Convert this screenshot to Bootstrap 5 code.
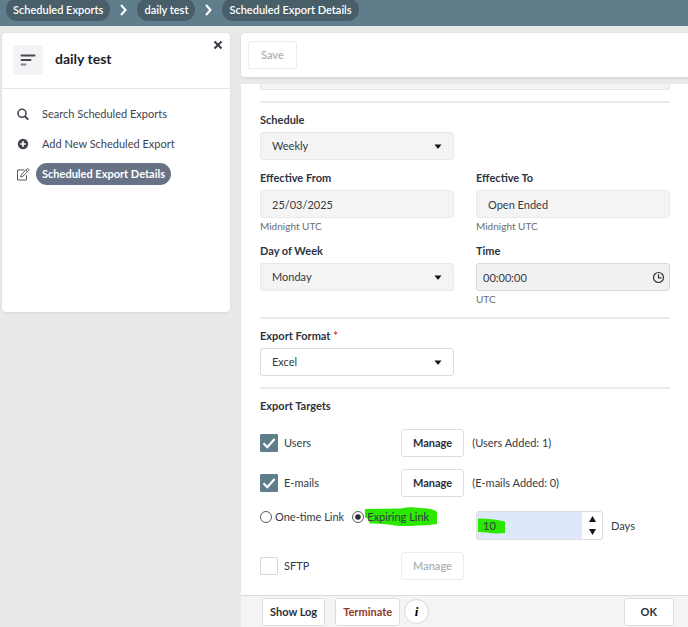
<!DOCTYPE html>
<html lang="en">
<head>
<meta charset="utf-8">
<meta name="viewport" content="width=device-width, initial-scale=1">
<title>Scheduled Export Details</title>
<link href="https://cdn.jsdelivr.net/npm/bootstrap@5.3.0/dist/css/bootstrap.min.css" rel="stylesheet">
<style>
body{font-family:Lato,"Open Sans",sans-serif;font-size:11px;line-height:16px;color:#343a46;background:#e9e9e9}
.topbar{background:#607d8b;height:26px;padding:0 6px 5px;gap:10px;flex:none}
.topbar a{background:#485e69;color:#fff;font-weight:600;border-radius:12px;padding:4px 7px 3px;text-decoration:none;white-space:nowrap}
.workspace{min-height:0;padding:7px 0 0 2px;gap:11px}
.side{width:228px;height:279px;flex:none;background:#fff;border-radius:4px;box-shadow:0 1px 3px rgba(0,0,0,.08)}
.side-head{height:56px;padding:0 11px 2px;gap:12px;border-bottom:1px solid #e6e7e9}
.side-icon{width:30px;height:30px;border-radius:4px;background:#f3f3f5}
.side-title{font-size:14px;font-weight:700;color:#1c1f2a;margin:0}
.close-btn{top:7px;right:7px;line-height:0}
.side-menu{padding:14px 14px;gap:8px}
.side-menu a{height:22px;gap:6px;color:#3f4450;text-decoration:none}
.side-menu svg{width:14px;height:14px;flex:none}
.side-menu span{padding:3px 6px;border-radius:11px}
.side-menu .current span{background:#687287;color:#fff;font-weight:700}
.tools{background:#fff;border-radius:4px 0 0 4px;padding:8px 7px;margin-bottom:7px;box-shadow:0 1px 3px rgba(0,0,0,.1)}
.pane{background:#fff;padding:0 18px 0 19px;min-height:0;overflow:hidden}
.act{font-size:11px;line-height:16px;font-weight:700;color:#2a2e38;background:#fff;border:1px solid #dcdddf;border-radius:3px;height:28px;padding:0 12px}
.act:disabled{color:#adb0b5;background:#fff;border-color:#ececec;opacity:1;font-weight:600}
.targets .act{padding:0 11px}
.act.danger-text{color:#8e3a2c;padding:0 7px}
.act.tight{padding:0 7px}
.clipped{height:6px;background:#f4f4f4;border:1px solid #e6e6e6;border-top:0;border-radius:0 0 3px 3px}
.rule{border:0;border-top:2px solid #ebebeb;opacity:1;margin:11px 0 9px}
.pair{--bs-gutter-x:22px;row-gap:10px}
.pair+.pair{margin-top:10px}
.cap{display:block;font-weight:700;color:#2f3440;margin:0 0 4px;font-size:11px}
.field,.field:disabled{font-size:11px;line-height:16px;height:28px;padding:0 11px;color:#343a46;border:1px solid #dcdddf;border-radius:3px;background-color:#fff;opacity:1}
.field.quiet{background-color:#f4f4f4;border-color:#e8e8e8}
.field.form-select{background-image:url("data:image/svg+xml,%3Csvg xmlns='http://www.w3.org/2000/svg' viewBox='0 0 8 5'%3E%3Cpath d='M0.5 0.5h7L4.6 4.2q-.6.6-1.2 0z' fill='%23111122'/%3E%3C/svg%3E");background-size:8px 5px;background-position:right 11px center}
.field.clock{background-color:#f1f1f1;border-color:#d9d9d9;padding:0 6px}
.clock-icon{right:5px;top:8px}
.hint{font-size:10px;line-height:14px;color:#6a6e76;margin-top:1px}
.targets{gap:12px;margin-top:15px}
.who{width:141px;gap:6px;flex:none}
.form-check-input.box{width:18px;height:18px;margin:0;border:1px solid #d6d8da;border-radius:1px;flex:none}
.form-check-input.box:checked{background-color:#607d8b;border-color:#607d8b;background-size:18px 18px;background-image:url("data:image/svg+xml,%3Csvg xmlns='http://www.w3.org/2000/svg' viewBox='0 0 18 18'%3E%3Cpath d='M3.500 9.200l3.800 4L14.600 5' fill='none' stroke='%23fff' stroke-width='2.200'/%3E%3C/svg%3E")}
.form-check-input.dot{width:12px;height:12px;margin:0;border:1px solid #5a5d65;flex:none;background-image:none}
.form-check-input.dot:checked{background:#fff url("data:image/svg+xml,%3Csvg xmlns='http://www.w3.org/2000/svg' viewBox='0 0 10 10'%3E%3Ccircle cx='5' cy='5' r='2.800' fill='%232a2d36'/%3E%3C/svg%3E") center/10px 10px no-repeat}
.kind{gap:3px}
.marked{isolation:isolate}
.marked .ink{z-index:-1;pointer-events:none}
.link-ink{left:-3px;top:-2px}
.num-ink{left:1px;top:6px}
.days-cell{padding-top:2px}
.days{width:127px;height:29px;border:1px solid #dcdddf;border-radius:3px;background:#dfe8fb;flex:none}
.days input{min-width:0;background:transparent;border:0;padding:0 6px;color:#343a46;appearance:textfield;-moz-appearance:textfield}
.days input::-webkit-inner-spin-button{display:none}
.steps{width:20px;background:#fff;flex:none;border-radius:0 3px 3px 0}
.steps button{flex:1;border:0;background:none;padding:0;line-height:0}
.foot{background:#f4f4f4;border-top:1px solid #dcdddf;padding:2px 14px 0 21px;height:32px;gap:10px;flex:none}
.info{width:25px;height:25px;border-radius:50%;border:1px solid #d8d9db;background:#fff;padding:0;font:italic 700 13px/16px "Liberation Serif",serif}
.info-wrap{margin-left:-6px;padding-top:1px}
</style>
<script src="https://cdn.jsdelivr.net/npm/bootstrap@5.3.0/dist/js/bootstrap.bundle.min.js"></script>
</head>
<body>
<div class="d-flex flex-column vh-100 overflow-hidden">
  <nav class="topbar d-flex align-items-end" aria-label="Breadcrumb">
    <a href="#">Scheduled Exports</a>
    <svg class="mb-1" width="7" height="14" viewBox="0 0 7 14"><path d="M1 2l4.500 5L1 12" fill="none" stroke="#fff" stroke-width="2"/></svg>
    <a href="#">daily test</a>
    <svg class="mb-1" width="7" height="14" viewBox="0 0 7 14"><path d="M1 2l4.500 5L1 12" fill="none" stroke="#fff" stroke-width="2"/></svg>
    <a href="#" aria-current="page">Scheduled Export Details</a>
  </nav>
  <div class="workspace d-flex flex-grow-1">
    <aside class="side position-relative">
      <button class="close-btn btn p-0 border-0 position-absolute" aria-label="Close"><svg width="10" height="10" viewBox="0 0 10 10"><path d="M1.500 1.500l7 7m0-7l-7 7" stroke="#343a46" stroke-width="2"/></svg></button>
      <div class="side-head d-flex align-items-center">
        <div class="side-icon d-flex align-items-center justify-content-center"><svg width="16" height="12" viewBox="0 0 16 12" stroke="#4a4655" stroke-width="2" stroke-linecap="round"><path d="M1.500 1.500h13M1.500 6h9"/><path d="M1.500 10.500h4" stroke="#85828d"/></svg></div>
        <h1 class="side-title">daily test</h1>
      </div>
      <nav class="side-menu d-flex flex-column" aria-label="Exports">
        <a href="#" class="d-flex align-items-center"><svg viewBox="0 0 14 14"><circle cx="6" cy="6.300" r="4" fill="none" stroke="#41444f" stroke-width="1.600"/><path d="M9 9.400l3.200 3.200" stroke="#41444f" stroke-width="2"/></svg><span>Search Scheduled Exports</span></a>
        <a href="#" class="d-flex align-items-center"><svg viewBox="0 0 14 14"><circle cx="7" cy="7" r="5.200" fill="#41444f"/><path d="M7 4.200v5.600M4.200 7h5.600" stroke="#fff" stroke-width="1.700"/></svg><span>Add New Scheduled Export</span></a>
        <a href="#" class="current d-flex align-items-center"><svg viewBox="0 0 14 14" fill="none" stroke="#555862"><path d="M8.300 3H1.500v10h9V8.200"/><path d="M5.300 7.700l5.600-5.900q.7-.6 1.400 0l.3.3q.6.6 0 1.300L7 9.300l-2.300.7z"/><path d="M9.800 3l1.700 1.700"/></svg><span>Scheduled Export Details</span></a>
      </nav>
    </aside>
    <main class="flex-grow-1 d-flex flex-column">
      <div class="tools"><button class="act" disabled>Save</button></div>
      <form class="pane flex-grow-1" onsubmit="return false">
        <div class="clipped"></div>
        <hr class="rule">
        <div class="row pair">
          <div class="col-6"><label class="cap" for="schedule">Schedule</label>
            <select id="schedule" class="field quiet form-select" disabled><option>Weekly</option></select></div>
        </div>
        <div class="row pair">
          <div class="col-6"><label class="cap" for="from">Effective From</label>
            <input id="from" class="field quiet form-control" value="25/03/2025" readonly><div class="hint">Midnight UTC</div></div>
          <div class="col-6"><label class="cap" for="to">Effective To</label>
            <input id="to" class="field quiet form-control" value="Open Ended" readonly><div class="hint">Midnight UTC</div></div>
          <div class="col-6"><label class="cap" for="dow">Day of Week</label>
            <select id="dow" class="field quiet form-select" disabled><option>Monday</option></select></div>
          <div class="col-6"><label class="cap" for="time">Time</label>
            <div class="position-relative"><input id="time" class="field clock form-control" value="00:00:00" readonly>
              <svg class="clock-icon position-absolute" width="13" height="13" viewBox="0 0 13 13" fill="none" stroke="#343741"><circle cx="6.500" cy="6.500" r="5" stroke-width="1.200"/><path d="M6.500 3.300v3.500h3" stroke-width="1.200"/></svg></div>
            <div class="hint">UTC</div></div>
        </div>
        <hr class="rule">
        <div class="row pair"><div class="col-6"><label class="cap" for="format">Export Format <span class="text-danger">*</span></label>
          <select id="format" class="field form-select"><option>Excel</option></select></div></div>
        <hr class="rule">
        <div class="cap mb-0">Export Targets</div>
        <div class="targets d-flex flex-column">
          <div class="d-flex align-items-center">
            <div class="who d-flex align-items-center"><input class="form-check-input box" type="checkbox" id="users" checked><label for="users">Users</label></div>
            <button class="act">Manage</button><span class="ms-2">(Users Added: 1)</span>
          </div>
          <div class="d-flex align-items-center">
            <div class="who d-flex align-items-center"><input class="form-check-input box" type="checkbox" id="mails" checked><label for="mails">E-mails</label></div>
            <button class="act">Manage</button><span class="ms-2">(E-mails Added: 0)</span>
          </div>
          <div class="row pair">
            <div class="col-6 d-flex align-items-start gap-2 text-nowrap">
              <div class="kind d-flex align-items-center"><input class="form-check-input dot" type="radio" name="link" id="once"><label for="once">One-time Link</label></div>
              <div class="kind d-flex align-items-center"><input class="form-check-input dot" type="radio" name="link" id="expiring" checked>
                <label for="expiring" class="marked position-relative">Expiring Link<svg class="ink link-ink position-absolute" width="74" height="20" viewBox="0 0 74 20"><path d="M1 2l36-.5q9-2 18-.5 14 0 18 4v12q-16 2-38 2-15-3-29-2.500l-2-5-3-1z" fill="#2be800"/></svg></label></div>
            </div>
            <div class="days-cell col-6 d-flex align-items-center gap-2">
              <div class="days marked d-flex position-relative">
                <svg class="ink num-ink position-absolute" width="28" height="16" viewBox="0 0 28 16"><path d="M0 .5q15 0 27 3V15q-10 1-19-.5l-8-.5z" fill="#2be800"/></svg>
                <input id="days" class="flex-grow-1" type="number" value="10">
                <div class="steps d-flex flex-column"><button type="button" aria-label="More days"><svg width="7" height="6" viewBox="0 0 7 6"><path d="M3.500 0L7 6H0z" fill="#14151f"/></svg></button><button type="button" aria-label="Fewer days"><svg width="7" height="6" viewBox="0 0 7 6"><path d="M3.500 6L7 0H0z" fill="#14151f"/></svg></button></div>
              </div>
              <label for="days">Days</label>
            </div>
          </div>
          <div class="d-flex align-items-center">
            <div class="who d-flex align-items-center"><input class="form-check-input box" type="checkbox" id="sftp"><label for="sftp">SFTP</label></div>
            <button class="act" disabled>Manage</button>
          </div>
        </div>
      </form>
      <footer class="foot d-flex align-items-start">
        <button class="act tight">Show Log</button>
        <button class="act danger-text">Terminate</button>
        <div class="info-wrap"><button class="info" aria-label="Information">i</button></div>
        <button class="act ms-auto px-3">OK</button>
      </footer>
    </main>
  </div>
</div>
</body>
</html>
